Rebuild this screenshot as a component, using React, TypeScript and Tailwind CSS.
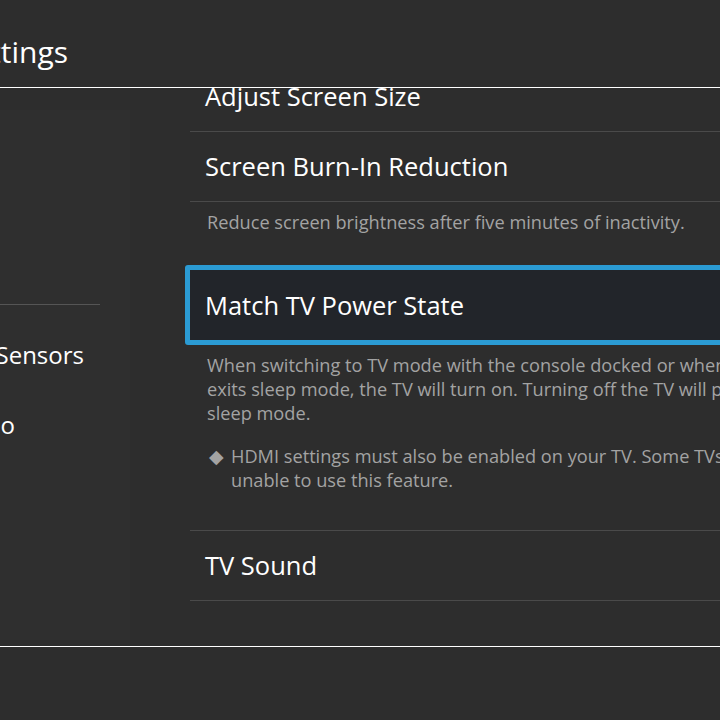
const font = { fontFamily: '"Open Sans", "Noto Sans", sans-serif' };

function Row({ label }: { label: string }) {
  return (
    <div className="flex h-[70px] items-center border-b border-[#4a4a4a] pl-[15px] text-[25.5px] text-white">
      {label}
    </div>
  );
}

export default function App() {
  return (
    <div
      className="flex h-[720px] w-[720px] flex-col overflow-hidden bg-[#2d2d2d] text-white"
      style={font}
    >
      <header className="flex h-[88px] shrink-0 items-center border-b border-white">
        <div className="flex w-[68px] shrink-0 justify-end overflow-visible whitespace-nowrap pt-[16px] text-[30px]">
          System Settings
        </div>
      </header>

      <div className="flex h-[559px] shrink-0 overflow-hidden border-b border-white">
        <aside className="mt-[22px] mb-[6px] flex w-[130px] shrink-0 flex-col bg-[#2f2f2f]">
          <div className="h-[195px] w-[100px] shrink-0 border-b border-[#555]" />
          <div className="flex h-[70px] w-[84px] shrink-0 items-center justify-end whitespace-nowrap pt-[29px] text-[24px]">
            Controllers and Sensors
          </div>
          <div className="flex h-[70px] w-[15px] shrink-0 items-center justify-end whitespace-nowrap pt-[29px] text-[24px]">
            amiibo
          </div>
        </aside>

        <main className="ml-[60px] mt-[-27px] w-[600px] shrink-0">
          <div className="border-t border-transparent">
            <Row label="Adjust Screen Size" />
            <Row label="Screen Burn-In Reduction" />
            <div className="h-[63px] whitespace-nowrap pl-[17px] pt-[8px] text-[18.2px] leading-[24px] text-[#a3a3a3]">
              Reduce screen brightness after five minutes of inactivity.
            </div>
            <div className="ml-[-5px] flex h-[80px] items-center rounded-[3px] border-[5px] border-[#2b9bd3] bg-[#22252a] pl-[15px] text-[25.5px] text-white">
              Match TV Power State
            </div>
            <div className="whitespace-nowrap border-b border-[#4a4a4a] pb-[38px] pl-[17px] pt-[8px] text-[18.2px] leading-[24px] text-[#a3a3a3]">
              <p>
                When switching to TV mode with the console docked or when the console
                <br />
                exits sleep mode, the TV will turn on. Turning off the TV will put the console into
                <br />
                sleep mode.
              </p>
              <div className="mt-[19px] flex gap-[7px] pl-[2px]">
                <span className="text-[19px] leading-[24px]">◆</span>
                <p>
                  HDMI settings must also be enabled on your TV. Some TVs may be
                  <br />
                  unable to use this feature.
                </p>
              </div>
            </div>
            <Row label="TV Sound" />
          </div>
        </main>
      </div>
    </div>
  );
}
